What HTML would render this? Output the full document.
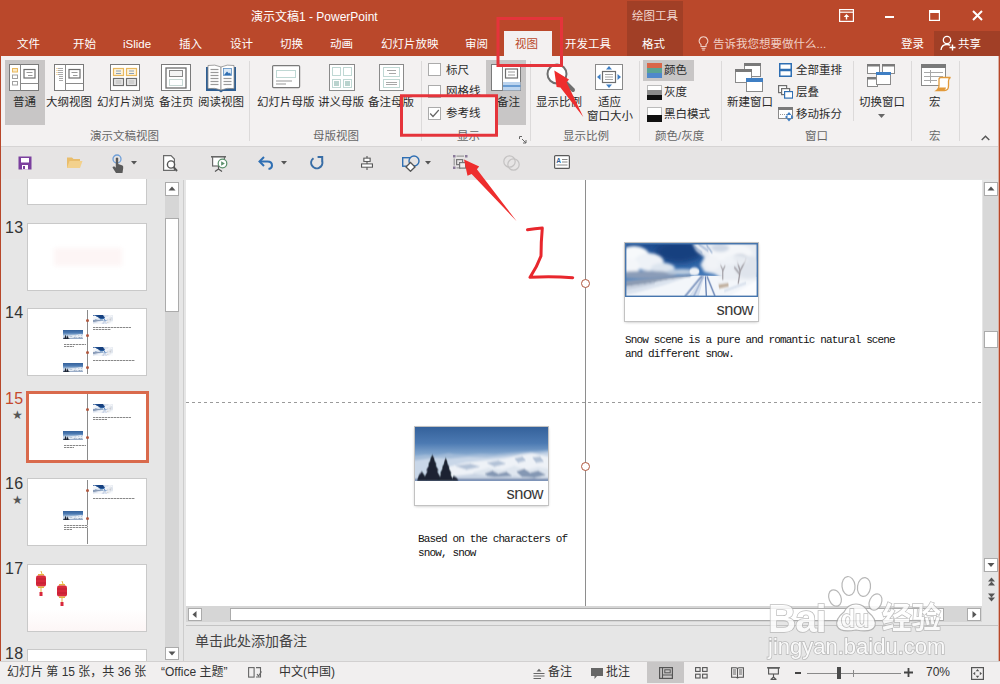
<!DOCTYPE html>
<html lang="zh-CN">
<head>
<meta charset="utf-8">
<title>演示文稿1 - PowerPoint</title>
<style>
*{box-sizing:border-box;margin:0;padding:0}
html,body{width:1000px;height:684px;overflow:hidden;background:#e6e6e6}
body{font-family:"Liberation Sans","Noto Sans CJK SC",sans-serif;font-size:12px;color:#2b2b2b;position:relative}
.abs{position:absolute}
.t{position:absolute;white-space:nowrap;line-height:1}
#titlebar{left:0;top:0;width:1000px;height:56px;background:#ba482b}
#titlebar .t{color:#fff}
.tab{font-size:11.5px;top:39px}
#ribbon{left:0;top:56px;width:1000px;height:91px;background:#f3f1f1;border-bottom:1px solid #d6d4d4}
#ribbon .t{font-size:11.5px;color:#2b2b2b;margin-top:1px}
#ribbon .g{color:#666;font-size:11.5px;top:74px}
.cb{width:13px;height:13px;background:#fff;border:1px solid #ababab}
.sep{position:absolute;top:5px;width:1px;height:80px;background:#dcdada}
#qat{left:0;top:147px;width:1000px;height:32px;background:#e6e4e4}
#thumbs{left:0;top:179px;width:184px;height:482px;background:#e6e6e6;overflow:hidden}
.th{position:absolute;left:27px;width:120px;height:68px;background:#fff;border:1px solid #c9c9c9}
.sbb{background:#fff;border:1px solid #ababab;overflow:hidden}
.sbb svg{display:block}
.num{position:absolute;left:5px;font-size:16px;color:#333;line-height:1;letter-spacing:.4px}
#main{left:186px;top:180px;width:797px;height:426px;background:#fff}
.card{background:#fff;box-shadow:0 0 0 1px #c2c2c2,0 1px 3px rgba(0,0,0,.3)}
.snow{font-family:"Liberation Sans",sans-serif;font-size:16.5px;color:#3a3a3a;letter-spacing:-.5px}
.mono{font-family:"Liberation Mono","DejaVu Sans Mono",monospace;font-size:11px;letter-spacing:-.86px;color:#111;margin-top:1px}
.wm{color:#fff;font-family:"Liberation Sans",sans-serif;-webkit-text-stroke:1.5px #b0b0b0;paint-order:stroke fill}
#status{left:0;top:661px;width:1000px;height:23px;background:#f1efef;border-top:1px solid #d2d0d0}
#status .t{font-size:12px;color:#333;top:4px}
</style>
</head>
<body>

<svg width="0" height="0" style="position:absolute">
  <defs>
    <filter id="b1" x="-20%" y="-20%" width="140%" height="140%"><feGaussianBlur stdDeviation="1.6"/></filter>
    <filter id="b2" x="-20%" y="-20%" width="140%" height="140%"><feGaussianBlur stdDeviation="0.8"/></filter>
    <filter id="b3" x="-20%" y="-20%" width="140%" height="140%"><feGaussianBlur stdDeviation="3"/></filter>
    <linearGradient id="sky1" x1="0" y1="0" x2="0" y2="1"><stop offset="0" stop-color="#1d4a8c"/><stop offset=".55" stop-color="#3b72b4"/><stop offset="1" stop-color="#9fbfe0"/></linearGradient>
    <linearGradient id="sky2" x1="0" y1="0" x2="0" y2="1"><stop offset="0" stop-color="#34619b"/><stop offset=".3" stop-color="#4c7ab2"/><stop offset=".55" stop-color="#8eafd3"/><stop offset="1" stop-color="#b9cde3"/></linearGradient>
    <clipPath id="cp1"><rect x="0" y="0" width="134" height="54"/></clipPath>
    <g id="photo1" clip-path="url(#cp1)">
      <rect width="134" height="54" fill="url(#sky1)"/>
      <ellipse cx="54" cy="9" rx="24" ry="11" fill="#15417f" filter="url(#b3)"/>
      <g filter="url(#b1)">
        <ellipse cx="9" cy="12" rx="15" ry="9" fill="#f7f9fb"/>
        <ellipse cx="24" cy="19" rx="15" ry="9" fill="#eef2f7"/>
        <ellipse cx="3" cy="24" rx="12" ry="9" fill="#f4f6f9"/>
        <ellipse cx="38" cy="25" rx="12" ry="5" fill="#dde5ef"/>
        <ellipse cx="20" cy="32" rx="32" ry="4" fill="#8a9cb8"/>
        <ellipse cx="58" cy="29" rx="16" ry="3" fill="#b9cade"/>
      </g>
      <path d="M0 41 L36 36 L74 32.500 L134 34 V54 H0 Z" fill="#f3f6fa"/>
      <g filter="url(#b2)">
        <path d="M0 38 L24 35.500 L46 33.500 L66 32 L66 33.500 L44 36.500 L20 41 L0 44 Z" fill="#8c9bb3"/>
        <path d="M0 44 L20 41 L44 36.500 L62 34.500 L40 42 L10 50 L0 52 Z" fill="#dbe3ee"/>
        <path d="M0 46 L16 43 L30 40" stroke="#a7b4c8" stroke-width="1" fill="none"/>
        <ellipse cx="70" cy="28.500" rx="5" ry="4" fill="#eef2f7"/>
      </g>
      <g filter="url(#b1)">
        <path d="M68 0 H134 V37 H100 L90 31 L80 29 L76 22 L80 14 L72 8 Z" fill="#e9edf3"/>
        <ellipse cx="106" cy="10" rx="22" ry="10" fill="#f4f6f9"/>
        <ellipse cx="124" cy="24" rx="14" ry="11" fill="#dfe4ec"/>
        <ellipse cx="88" cy="20" rx="8" ry="7" fill="#f1f3f7"/>
        <ellipse cx="96" cy="5" rx="9" ry="4" fill="#cfd8e5"/>
        <ellipse cx="116" cy="15" rx="7" ry="4" fill="#c9d0dc"/>
      </g>
      <g stroke="#5f83b8" stroke-width="1" fill="none" filter="url(#b2)">
        <path d="M70 4 L78 10 M74 1 L84 8 M82 2 L88 10"/>
      </g>
      <g stroke="#8f8a90" fill="none" filter="url(#b2)" opacity=".85">
        <path d="M98.500 37 L98.500 27 L96 21 M98.500 28 L101 22" stroke-width="1.100"/>
        <path d="M114 41 L116 28 L113 18 M116 28 L122 16 M115.500 31 L110 24" stroke-width="1.300"/>
      </g>
      <g filter="url(#b1)"><ellipse cx="112" cy="17" rx="12" ry="5" fill="#eef1f6" opacity=".8"/><ellipse cx="98" cy="20" rx="6" ry="3" fill="#eef1f6" opacity=".8"/></g>
      <g stroke="#5d7aae" fill="none" filter="url(#b2)">
        <path d="M77.500 33 L60 54" stroke-width="1.500"/><path d="M79 33 L69 54" stroke-width="1.500"/>
        <path d="M81 33 L82 54" stroke-width="1.300"/><path d="M82.500 33 L91 54" stroke-width="1.300"/>
      </g>
      <path d="M64 54 L78.500 33 L80 33 L74 54 Z" fill="#c5d2e6" opacity=".6"/>
      <g filter="url(#b2)">
        <path d="M94 41.500 L104 40 L104.500 43.500 L95 45.500 Z" fill="#bfae9c"/>
        <path d="M93 40 L104 38.500" stroke="#eef1f5" stroke-width="1.500"/>
        <path d="M104 54 L134 37 V54 Z" fill="#fbfcfe"/>
        <path d="M100 48 L122 40" stroke="#cbd6e6" stroke-width="1.500"/>
      </g>
    </g>
    <clipPath id="cp2"><rect x="0" y="0" width="134" height="53"/></clipPath>
    <g id="photo2" clip-path="url(#cp2)">
      <rect width="134" height="53" fill="url(#sky2)"/>
      <g filter="url(#b2)">
        <path d="M0 29 L10 27.500 L22 28 L34 26 L40 27 L52 27.500 L66 26.500 L80 27 L96 25.500 L110 24.500 L122 24 L134 23 V53 H0 Z" fill="#a3bbd8"/>
        <path d="M0 33 L18 30.500 L36 31 L54 29.500 L72 30 L90 28.500 L104 27 L116 25 L126 26 L134 25 V53 H0 Z" fill="#c9d7e8"/>
        <path d="M30 40 L50 35 L70 33 L90 31 L106 27.500 L118 26 L134 29 V53 H24 Z" fill="#eef2f7"/>
        <path d="M40 38 L56 36 L66 39 L52 42 Z M72 35 L84 33 L92 36 L80 39 Z M100 31 L108 29 L112 33 L104 35 Z M118 30 L126 29 L130 34 L122 35 Z" fill="#9fb2cc" opacity=".75"/>
        <path d="M60 44 L74 40 L88 42 L100 38 L112 42 L124 39 L134 41 V53 H50 Z" fill="#dfe6ef"/>
        <path d="M70 46 L78 43 L84 46 L92 44 L98 48 L88 50 L76 50 Z M102 44 L110 41 L116 45 L124 43 L132 47 L120 50 L108 49 Z" fill="#6d83a4" opacity=".8"/>
        <path d="M40 48 L60 46 L80 49 L100 48 L120 50 L134 49 V53 H36 Z" fill="#c9d4e3"/>
        <path d="M0 51 H134 V53 H0 Z" fill="#3f6296"/>
      </g>
      <g fill="#1a2430" filter="url(#b2)">
        <path d="M17.500 27.500 L20 32 L19 32 L22 37 L20.500 37 L24 43 L22 43 L26 50 L27 53 H8 L9 50 L13 43 L11 43 L14.500 37 L13 37 L16 32 L15 32 Z"/>
        <path d="M31 30.500 L33 35 L32.200 35 L35 40 L33.800 40 L37 46 L35.500 46 L39 53 H23 L26.500 46 L25 46 L28.200 40 L27 40 L29.800 35 L29 35 Z"/>
        <path d="M2 53 L4 47 L7 44 L10 48 L12 53 Z M36 53 L39 48 L42 50 L44 53 Z"/>
      </g>
    </g>
  </defs>
</svg>
<!-- TITLE BAR -->
<div id="titlebar" class="abs">
  <div class="t" style="left:251px;top:11px;font-size:12px">演示文稿1 - PowerPoint</div>
  <div class="abs" style="left:627px;top:1px;width:56px;height:55px;background:#a13f26"></div>
  <div class="t" style="left:632px;top:11px;font-size:11.5px;color:#f3d9d1">绘图工具</div>
  <div class="t tab" style="left:17px">文件</div>
  <div class="t tab" style="left:73px">开始</div>
  <div class="t tab" style="left:123px">iSlide</div>
  <div class="t tab" style="left:179px">插入</div>
  <div class="t tab" style="left:230px">设计</div>
  <div class="t tab" style="left:280px">切换</div>
  <div class="t tab" style="left:330px">动画</div>
  <div class="t tab" style="left:381px">幻灯片放映</div>
  <div class="t tab" style="left:465px">审阅</div>
  <div class="abs" style="left:504px;top:31px;width:48px;height:25px;background:#f3f1f1"></div>
  <div class="t tab" style="left:515px;color:#ba482b">视图</div>
  <div class="t tab" style="left:565px">开发工具</div>
  <div class="t tab" style="left:642px">格式</div>
  <div class="t tab" style="left:713px;color:#f0cfc5">告诉我您想要做什么...</div>
  <div class="t tab" style="left:901px">登录</div>
  <div class="abs" style="left:934px;top:31px;width:66px;height:25px;background:#a13f26"></div>
  <div class="t tab" style="left:958px">共享</div>

  <svg class="abs" style="left:839px;top:9px" width="15" height="13" viewBox="0 0 15 13"><rect x=".6" y=".6" width="13.8" height="11.8" fill="none" stroke="#fff" stroke-width="1.2"/><line x1=".6" y1="3.2" x2="14.4" y2="3.2" stroke="#fff" stroke-width="1.2"/><path d="M7.500 5 L10.300 8 H8.200 V10.500 H6.800 V8 H4.700 Z" fill="#fff"/></svg>
  <div class="abs" style="left:885px;top:16px;width:9px;height:2px;background:#fff"></div>
  <svg class="abs" style="left:929px;top:10px" width="11" height="11" viewBox="0 0 11 11"><rect x=".6" y=".6" width="9.8" height="9.8" fill="none" stroke="#fff" stroke-width="1.2"/><rect x="0" y="0" width="11" height="3" fill="#fff"/></svg>
  <svg class="abs" style="left:972px;top:10px" width="11" height="11" viewBox="0 0 11 11"><path d="M1 1 L10 10 M10 1 L1 10" stroke="#fff" stroke-width="2" fill="none"/></svg>
  <svg class="abs" style="left:698px;top:36px" width="11" height="15" viewBox="0 0 11 15"><path d="M5.500 .8 A4.300 4.300 0 0 1 8 8.600 V10.500 H3 V8.600 A4.300 4.300 0 0 1 5.500 .8 Z" fill="none" stroke="#f0cfc5" stroke-width="1.100"/><line x1="3.500" y1="12.300" x2="7.500" y2="12.300" stroke="#f0cfc5" stroke-width="1.100"/><line x1="4.200" y1="14" x2="6.800" y2="14" stroke="#f0cfc5" stroke-width="1.100"/></svg>
  <svg class="abs" style="left:940px;top:35px" width="16" height="16" viewBox="0 0 16 16"><circle cx="7" cy="5" r="3.700" fill="none" stroke="#fff" stroke-width="1.300"/><path d="M1 15 Q1.500 9.500 7 9.500 Q9 9.500 10.200 10.300" fill="none" stroke="#fff" stroke-width="1.300"/><path d="M12.500 9.500 V15.500 M9.500 12.500 H15.500" stroke="#fff" stroke-width="1.400"/></svg>
</div>

<!-- RIBBON -->
<div id="ribbon" class="abs">
  <!-- group 1 -->
  <div class="abs" style="left:5px;top:4px;width:40px;height:65px;background:#c8c6c6"></div>
  <svg class="abs" style="left:9px;top:8px" width="31" height="28" viewBox="0 0 31 28">
    <rect x="0.5" y="0.5" width="29" height="26" fill="#fff" stroke="#7a7a7a"/>
    <line x1="11.5" y1="0.5" x2="11.5" y2="26.5" stroke="#8a8a8a"/>
    <line x1="11.5" y1="19.5" x2="29.5" y2="19.5" stroke="#8a8a8a"/>
    <rect x="3.5" y="4.5" width="5" height="3.5" fill="#fbe9c4" stroke="#e8b85e"/>
    <rect x="3.5" y="11" width="5" height="3.5" fill="#fff" stroke="#a0a0a0"/>
    <rect x="3.5" y="17.5" width="5" height="3.5" fill="#fff" stroke="#a0a0a0"/>
    <rect x="15" y="5.5" width="11" height="8.5" fill="#fff" stroke="#6e6e6e" stroke-width="1.2"/>
    <line x1="17.5" y1="8.5" x2="23.5" y2="8.5" stroke="#9a9a9a"/>
    <line x1="19" y1="11.5" x2="23.5" y2="11.5" stroke="#9a9a9a"/>
  </svg>
  <div class="t" style="left:13px;top:40px">普通</div>

  <svg class="abs" style="left:54px;top:8px" width="31" height="28" viewBox="0 0 31 28">
    <rect x="0.5" y="0.5" width="29" height="26" fill="#fff" stroke="#7a7a7a"/>
    <line x1="11.5" y1="0.5" x2="11.5" y2="26.5" stroke="#8a8a8a"/>
    <line x1="11.5" y1="19.5" x2="29.5" y2="19.5" stroke="#8a8a8a"/>
    <g stroke="#a9a9a9"><line x1="4" y1="4.5" x2="9" y2="4.5"/><line x1="4" y1="6.5" x2="9" y2="6.5"/><line x1="4" y1="8.5" x2="9" y2="8.5"/><line x1="4" y1="10.5" x2="9" y2="10.5"/><line x1="5" y1="12.5" x2="9" y2="12.5"/><line x1="5" y1="14.5" x2="9" y2="14.5"/><line x1="5" y1="16.5" x2="9" y2="16.5"/></g>
    <g fill="#e8b85e"><rect x="2.5" y="4" width="1" height="1"/><rect x="2.5" y="6" width="1" height="1"/><rect x="2.5" y="8" width="1" height="1"/><rect x="2.5" y="10" width="1" height="1"/></g>
    <rect x="15" y="5.5" width="11" height="8.5" fill="#fff" stroke="#6e6e6e" stroke-width="1.2"/>
    <line x1="17.5" y1="8.5" x2="23.5" y2="8.5" stroke="#9a9a9a"/>
    <line x1="19" y1="11.5" x2="23.5" y2="11.5" stroke="#9a9a9a"/>
  </svg>
  <div class="t" style="left:46px;top:40px">大纲视图</div>

  <svg class="abs" style="left:110px;top:8px" width="31" height="28" viewBox="0 0 31 28">
    <rect x="0.5" y="0.5" width="29" height="26" fill="#fff" stroke="#7a7a7a"/>
    <rect x="3.5" y="4.5" width="10" height="7" fill="#fdf3dc" stroke="#e8b85e" stroke-width="1.2"/>
    <rect x="16.5" y="4.5" width="10" height="7" fill="#fdf3dc" stroke="#e8b85e" stroke-width="1.2"/>
    <rect x="3.5" y="14.5" width="10" height="7" fill="#eee" stroke="#6e6e6e" stroke-width="1.2"/>
    <rect x="16.5" y="14.5" width="10" height="7" fill="#eee" stroke="#6e6e6e" stroke-width="1.2"/>
    <g stroke="#8aa0b8"><line x1="6" y1="7" x2="11" y2="7"/><line x1="6" y1="9.5" x2="11" y2="9.5"/><line x1="19" y1="7" x2="24" y2="7"/><line x1="19" y1="9.5" x2="24" y2="9.5"/></g>
    <g stroke="#b0b0b0"><line x1="5.5" y1="17" x2="11.5" y2="17"/><line x1="5.5" y1="19" x2="11.5" y2="19"/><line x1="18.5" y1="17" x2="24.5" y2="17"/><line x1="18.5" y1="19" x2="24.5" y2="19"/></g>
  </svg>
  <div class="t" style="left:97px;top:40px">幻灯片浏览</div>

  <svg class="abs" style="left:161px;top:8px" width="31" height="28" viewBox="0 0 31 28">
    <rect x="0.5" y="0.5" width="29" height="26" fill="#fff" stroke="#7a7a7a"/>
    <rect x="5" y="4" width="20" height="20" fill="#fff" stroke="#6e6e6e" stroke-width="1.3"/>
    <rect x="8.5" y="6.5" width="13" height="6" fill="#f4f4f4" stroke="#8a8a8a"/>
    <rect x="8.5" y="15.5" width="13" height="6" fill="none" stroke="#8fb0a8" stroke-dasharray="1 1"/>
  </svg>
  <div class="t" style="left:159px;top:40px">备注页</div>

  <svg class="abs" style="left:205px;top:7px" width="32" height="30" viewBox="0 0 32 30">
    <path d="M1 4 L1 28 L14 28 L16 29.5 L18 28 L31 28 L31 4 Z" fill="#2f5f93"/>
    <path d="M3 2.5 Q10 1 16 4 L16 27 Q10 24.5 3 25.5 Z" fill="#fff" stroke="#8a8a8a" stroke-width=".8"/>
    <path d="M29 2.5 Q22 1 16 4 L16 27 Q22 24.5 29 25.5 Z" fill="#fff" stroke="#8a8a8a" stroke-width=".8"/>
    <g stroke="#9a9a9a" stroke-width="1.2"><line x1="5.5" y1="6.5" x2="13.5" y2="6.5"/><line x1="5.5" y1="9.5" x2="13.5" y2="9.5"/><line x1="5.5" y1="12.5" x2="13.5" y2="12.5"/><line x1="5.5" y1="15.5" x2="13.5" y2="15.5"/><line x1="5.5" y1="18.5" x2="13.5" y2="18.5"/><line x1="5.5" y1="21.5" x2="13.5" y2="21.5"/>
    <line x1="18.5" y1="15.5" x2="26.5" y2="15.5"/><line x1="18.5" y1="18.5" x2="26.5" y2="18.5"/><line x1="18.5" y1="21.5" x2="26.5" y2="21.5"/></g>
    <rect x="18.5" y="5.5" width="8" height="7" fill="#dbe9f6" stroke="#5b8fc4" stroke-width=".8"/>
    <path d="M19 12 L22 8.5 L24 10.5 L25 9.5 L26 12 Z" fill="#2f6fb3"/>
  </svg>
  <div class="t" style="left:198px;top:40px">阅读视图</div>
  <div class="t g" style="left:90px">演示文稿视图</div>
  <div class="sep" style="left:249px"></div>

  <!-- group 2 -->
  <svg class="abs" style="left:272px;top:9px" width="29" height="24" viewBox="0 0 29 24">
    <rect x="0.6" y="0.6" width="27" height="22" rx="1" fill="#fff" stroke="#7a7a7a" stroke-width="1.2"/>
    <rect x="4.5" y="5.5" width="19" height="7" fill="none" stroke="#7fb0a8" stroke-dasharray="1 1"/>
    <line x1="4" y1="16" x2="20" y2="16" stroke="#a8a8a8" stroke-width="1.2"/>
    <line x1="4" y1="19" x2="14" y2="19" stroke="#a8a8a8" stroke-width="1.2"/>
  </svg>
  <div class="t" style="left:257px;top:40px">幻灯片母版</div>

  <svg class="abs" style="left:329px;top:8px" width="27" height="28" viewBox="0 0 27 28">
    <rect x="0.5" y="0.5" width="25" height="26" fill="#fff" stroke="#8a8a8a"/>
    <g fill="none" stroke="#7fb0a8" stroke-dasharray="1 1">
      <rect x="3.5" y="3.5" width="8" height="8"/><rect x="14.5" y="3.5" width="8" height="8"/>
      <rect x="3.5" y="15.5" width="8" height="8"/><rect x="14.5" y="15.5" width="8" height="8"/>
    </g>
    <g fill="#b9d3ce"><rect x="5" y="17" width="5" height="5"/><rect x="16" y="17" width="5" height="5"/></g>
  </svg>
  <div class="t" style="left:318px;top:40px">讲义母版</div>

  <svg class="abs" style="left:379px;top:8px" width="27" height="28" viewBox="0 0 27 28">
    <rect x="0.5" y="0.5" width="24" height="26" fill="#fff" stroke="#8a8a8a"/>
    <g fill="none" stroke="#7fb0a8" stroke-dasharray="1 1">
      <rect x="4.5" y="3.5" width="16" height="9"/><rect x="4.5" y="15.5" width="16" height="8"/>
    </g>
    <g stroke="#a8a8a8"><line x1="8" y1="6.5" x2="17" y2="6.5"/><line x1="10" y1="9.5" x2="17" y2="9.5"/><line x1="7" y1="18.5" x2="18" y2="18.5"/><line x1="7" y1="20.5" x2="18" y2="20.5"/></g>
  </svg>
  <div class="t" style="left:368px;top:40px">备注母版</div>
  <div class="t g" style="left:313px">母版视图</div>
  <div class="sep" style="left:421px"></div>

  <!-- group 3 -->
  <div class="abs cb" style="left:428px;top:7px"></div>
  <div class="t" style="left:446px;top:8px">标尺</div>
  <div class="abs cb" style="left:428px;top:29px"></div>
  <div class="t" style="left:446px;top:29px">网格线</div>
  <div class="abs cb" style="left:428px;top:51px;z-index:2"></div>
  <svg class="abs" style="left:429px;top:53px;z-index:2" width="11" height="9" viewBox="0 0 11 9"><path d="M1.2 4.5 L4 7.5 L9.8 1" fill="none" stroke="#666" stroke-width="1.2"/></svg>
  <div class="t" style="left:446px;top:51px;z-index:2">参考线</div>

  <div class="abs" style="left:486px;top:4px;width:40px;height:65px;background:#c8c6c6"></div>
  <svg class="abs" style="left:491px;top:8px" width="31" height="28" viewBox="0 0 31 28">
    <rect x="0.5" y="0.5" width="29" height="26" fill="#fff" stroke="#7a7a7a"/>
    <line x1="11.5" y1="0.5" x2="11.5" y2="26.5" stroke="#8a8a8a"/>
    <rect x="14.5" y="5" width="12" height="9" fill="#fff" stroke="#6e6e6e" stroke-width="1.2"/>
    <line x1="17" y1="8" x2="24" y2="8" stroke="#9a9a9a"/><line x1="17" y1="11" x2="24" y2="11" stroke="#9a9a9a"/>
    <rect x="12" y="18" width="17.5" height="8.5" fill="#bcd4ee"/>
    <line x1="12" y1="22" x2="29.5" y2="22" stroke="#3f7fc4" stroke-width="1.3"/>
  </svg>
  <div class="t" style="left:497px;top:40px">备注</div>
  <div class="abs" style="left:484px;top:40px;width:12px;height:39px;background:#f3f1f1;z-index:1"></div>
  <div class="t g" style="left:457px;z-index:2">显示</div>
  <svg class="abs" style="left:519px;top:80px" width="8" height="8" viewBox="0 0 8 8"><path d="M0.5 3 V0.5 H3 M3 3 L7 7 M4 7 H7 V4" fill="none" stroke="#666" stroke-width="1"/></svg>
  <div class="sep" style="left:530px"></div>

  <!-- group 4 -->
  <svg class="abs" style="left:545px;top:6px" width="32" height="32" viewBox="0 0 32 32">
    <circle cx="12" cy="12" r="9.5" fill="#fff" stroke="#6e6e6e" stroke-width="2"/>
    <line x1="19" y1="19" x2="28" y2="28" stroke="#6e6e6e" stroke-width="4" stroke-linecap="round"/>
  </svg>
  <div class="t" style="left:536px;top:40px">显示比例</div>
  <svg class="abs" style="left:595px;top:8px" width="29" height="27" viewBox="0 0 29 27">
    <rect x="0.5" y="0.5" width="27" height="25" fill="#fff" stroke="#8a8a8a"/>
    <rect x="7.5" y="7.5" width="13" height="11" fill="#fff" stroke="#6e6e6e" stroke-width="1.2"/>
    <g stroke="#a8a8a8"><line x1="10" y1="10.5" x2="18" y2="10.5"/><line x1="10" y1="13" x2="18" y2="13"/><line x1="10" y1="15.5" x2="18" y2="15.5"/></g>
    <g fill="#3f7fc4"><path d="M14 2 L17 5.5 H11 Z"/><path d="M14 24 L17 20.5 H11 Z"/><path d="M2 13 L5.5 10 V16 Z"/><path d="M26 13 L22.5 10 V16 Z"/></g>
  </svg>
  <div class="t" style="left:598px;top:40px">适应</div>
  <div class="t" style="left:587px;top:54px">窗口大小</div>
  <div class="t g" style="left:563px">显示比例</div>
  <div class="sep" style="left:639px"></div>

  <!-- group 5 -->
  <div class="abs" style="left:643px;top:4px;width:51px;height:21px;background:#c8c6c6"></div>
  <svg class="abs" style="left:647px;top:7px" width="15" height="15" viewBox="0 0 15 15"><rect width="15" height="5" fill="#d9674a"/><rect y="5" width="15" height="5" fill="#5aa394"/><rect y="10" width="15" height="5" fill="#4f88cc"/></svg>
  <div class="t" style="left:664px;top:8px">颜色</div>
  <svg class="abs" style="left:647px;top:29px" width="15" height="15" viewBox="0 0 15 15"><rect x=".5" y=".5" width="14" height="14" fill="#fff" stroke="#bbb"/><rect y="5" width="15" height="5" fill="#8c8c8c"/><rect y="10" width="15" height="5" fill="#111"/></svg>
  <div class="t" style="left:664px;top:30px">灰度</div>
  <svg class="abs" style="left:647px;top:51px" width="15" height="15" viewBox="0 0 15 15"><rect x=".5" y=".5" width="14" height="14" fill="#fff" stroke="#bbb"/><rect y="8" width="15" height="7" fill="#111"/></svg>
  <div class="t" style="left:664px;top:52px">黑白模式</div>
  <div class="t g" style="left:655px">颜色/灰度</div>
  <div class="sep" style="left:721px"></div>

  <!-- group 6 -->
  <svg class="abs" style="left:735px;top:7px" width="29" height="30" viewBox="0 0 29 30">
    <rect x="9.5" y="0.5" width="16" height="13" fill="#fff" stroke="#8a8a8a"/><rect x="9" y="0" width="17" height="3" fill="#7a7a7a"/>
    <rect x="0.5" y="6.5" width="16" height="13" fill="#fff" stroke="#8a8a8a"/><rect x="0" y="6" width="17" height="3" fill="#7a7a7a"/>
    <rect x="11.5" y="15.5" width="16" height="13" fill="#fff" stroke="#8a8a8a"/><rect x="11" y="15" width="17" height="4" fill="#3f7fc4"/>
  </svg>
  <div class="t" style="left:727px;top:40px">新建窗口</div>
  <svg class="abs" style="left:779px;top:7px" width="13" height="14" viewBox="0 0 13 14"><rect x=".75" y=".75" width="11.5" height="12.5" fill="#fff" stroke="#2f6fb3" stroke-width="1.5"/><line x1="0" y1="7" x2="13" y2="7" stroke="#2f6fb3" stroke-width="2.5"/></svg>
  <div class="t" style="left:796px;top:8px">全部重排</div>
  <svg class="abs" style="left:778px;top:29px" width="15" height="14" viewBox="0 0 15 14"><rect x=".6" y=".6" width="8" height="7" fill="#fff" stroke="#6e6e6e" stroke-width="1.2"/><rect x="3.6" y="3.6" width="8" height="6" fill="#fff" stroke="#6e6e6e" stroke-width="1.2"/><rect x="6.6" y="6.6" width="8" height="6.5" fill="#fff" stroke="#2f6fb3" stroke-width="1.2"/></svg>
  <div class="t" style="left:796px;top:30px">层叠</div>
  <svg class="abs" style="left:778px;top:51px" width="16" height="15" viewBox="0 0 16 15"><rect x=".5" y=".5" width="14" height="11" fill="#fff" stroke="#8a8a8a"/><rect x="0" y="0" width="15" height="3" fill="#7a7a7a"/><line x1="2" y1="7.5" x2="9" y2="7.5" stroke="#9a9a9a" stroke-dasharray="1 1"/><path d="M11 5 L13.5 8 H8.5 Z M11 14.5 L13.5 11.5 H8.5 Z M7 10 L9.5 7.8 V12.2 Z M15.5 10 L13 7.8 V12.2 Z" fill="#3f7fc4"/></svg>
  <div class="t" style="left:796px;top:52px">移动拆分</div>
  <div class="sep" style="left:853px;height:60px"></div>
  <svg class="abs" style="left:867px;top:8px" width="29" height="25" viewBox="0 0 29 25">
    <rect x="0.5" y="0.5" width="12" height="9" fill="#fff" stroke="#8a8a8a"/><rect x="0" y="0" width="13" height="2.5" fill="#7a7a7a"/>
    <rect x="15.5" y="0.5" width="12" height="9" fill="#fff" stroke="#8a8a8a"/><rect x="15" y="0" width="13" height="2.5" fill="#7a7a7a"/>
    <rect x="0.5" y="13.5" width="10" height="9" fill="#fff" stroke="#8a8a8a"/><rect x="0" y="13" width="11" height="2.5" fill="#7a7a7a"/>
    <rect x="9.500" y="8.5" width="14" height="12" fill="#fff" stroke="#8a8a8a"/><rect x="9" y="8" width="15" height="3" fill="#3f7fc4"/>
  </svg>
  <div class="t" style="left:859px;top:40px">切换窗口</div>
  <svg class="abs" style="left:878px;top:58px" width="7" height="4" viewBox="0 0 7 4"><path d="M0 0 H7 L3.5 4 Z" fill="#666"/></svg>
  <div class="t g" style="left:805px">窗口</div>
  <div class="sep" style="left:911px"></div>

  <!-- group 7 -->
  <svg class="abs" style="left:921px;top:8px" width="31" height="28" viewBox="0 0 31 28">
    <rect x="0.5" y="0.5" width="24" height="21" fill="#fff" stroke="#8a8a8a"/><rect x="0" y="0" width="25" height="4" fill="#7a7a7a"/>
    <g stroke="#a8a8a8"><line x1="3" y1="8.500" x2="22" y2="8.500"/><line x1="3" y1="12.5" x2="22" y2="12.5"/><line x1="3" y1="16.5" x2="16" y2="16.5"/><line x1="9.5" y1="6" x2="9.5" y2="19"/></g>
    <path d="M18 15.500 Q18 13.500 20 13.500 H29.500 Q27.500 14.500 27.500 17 V22 Q27.500 26.500 23.500 26.500 H15.500 Q18 25 18 22 Z" fill="#fff" stroke="#e29a3b" stroke-width="1.3"/>
    <path d="M15.500 26.500 H23 Q25 25 25 23.500 H17 Q17 25.500 15.500 26.500 Z" fill="#e29a3b"/>
  </svg>
  <div class="t" style="left:929px;top:40px">宏</div>
  <div class="t g" style="left:929px">宏</div>
  <div class="sep" style="left:959px"></div>
  <svg class="abs" style="left:981px;top:79px" width="9" height="6" viewBox="0 0 9 6"><path d="M0.700 5 L4.500 1.200 L8.300 5" fill="none" stroke="#555" stroke-width="1.400"/></svg>
</div>

<!-- QAT -->
<div id="qat" class="abs">
  <svg class="abs" style="left:18px;top:9px" width="14" height="14" viewBox="0 0 14 14"><path d="M.5 .5 H13.500 V13.500 H.5 Z" fill="#7b3f9e"/><rect x="3" y="2" width="8" height="4.500" fill="#fff"/><rect x="4" y="9" width="6" height="4.500" fill="#fff"/><rect x="5" y="10" width="2" height="3" fill="#7b3f9e"/></svg>
  <svg class="abs" style="left:66px;top:9px" width="17" height="13" viewBox="0 0 17 13"><path d="M1 1.500 H6 L7.500 3 H14 V12 H1 Z" fill="#e9bd6c"/><path d="M3.500 5 H16.500 L14 12 H1 Z" fill="#f3d18c"/></svg>
  <svg class="abs" style="left:111px;top:7px" width="14" height="20" viewBox="0 0 14 20"><circle cx="6" cy="5" r="4" fill="none" stroke="#6f9fd8" stroke-width="1.300"/><path d="M4.800 4 Q6 2.800 7.200 4 V10 L11.500 11.500 Q12.500 12 12.200 14 L11.500 19 H5 L1.500 13.500 Q1.800 12 3.500 12.500 L4.800 13.800 Z" fill="#5a5a5a"/></svg>
  <svg class="abs" style="left:131px;top:14px" width="6" height="4" viewBox="0 0 6 4"><path d="M0 0 H6 L3 3.500 Z" fill="#555"/></svg>
  <svg class="abs" style="left:163px;top:8px" width="15" height="17" viewBox="0 0 15 17"><path d="M.6 .6 H8 L11.400 4 V15.400 H.6 Z" fill="#fff" stroke="#6a6a6a" stroke-width="1.200"/><circle cx="8" cy="9.500" r="3.600" fill="#fff" stroke="#555" stroke-width="1.400"/><line x1="10.600" y1="12.200" x2="14" y2="16" stroke="#555" stroke-width="2"/></svg>
  <svg class="abs" style="left:211px;top:9px" width="17" height="17" viewBox="0 0 17 17"><line x1="0" y1=".8" x2="15" y2=".8" stroke="#555" stroke-width="1.400"/><rect x="1.600" y="1" width="11.800" height="9" fill="#fff" stroke="#6a6a6a" stroke-width="1.200"/><path d="M7.500 10 V13 M4 15.500 L7.500 13 L11 15.500" fill="none" stroke="#555" stroke-width="1.200"/><circle cx="11.500" cy="7.500" r="4.300" fill="#fff" stroke="#5a8f6a" stroke-width="1.200"/><path d="M10.200 5.300 L13.800 7.500 L10.200 9.700 Z" fill="#5a8f6a"/></svg>
  <svg class="abs" style="left:258px;top:9px" width="16" height="14" viewBox="0 0 16 14"><path d="M6 1 L1.500 5.500 L6 10" fill="none" stroke="#2f6fb3" stroke-width="2"/><path d="M2 5.500 H9.500 Q14 5.500 14 9.500 Q14 12.500 10.500 13" fill="none" stroke="#2f6fb3" stroke-width="2"/></svg>
  <svg class="abs" style="left:281px;top:14px" width="6" height="4" viewBox="0 0 6 4"><path d="M0 0 H6 L3 3.500 Z" fill="#555"/></svg>
  <svg class="abs" style="left:310px;top:8px" width="15" height="16" viewBox="0 0 15 16"><path d="M3.500 3.200 A5.600 5.600 0 1 0 12.100 6" fill="none" stroke="#386da6" stroke-width="2"/><path d="M7.600 2 H12.200 V6.600" fill="none" stroke="#386da6" stroke-width="2"/></svg>
  <svg class="abs" style="left:361px;top:9px" width="12" height="14" viewBox="0 0 13 17" preserveAspectRatio="none"><line x1="6.500" y1="0" x2="6.500" y2="17" stroke="#555" stroke-width="1.200"/><rect x="3.100" y="2.600" width="6.800" height="4" fill="#fff" stroke="#555" stroke-width="1.200"/><rect x=".6" y="9.600" width="11.800" height="4" fill="#fff" stroke="#555" stroke-width="1.200"/></svg>
  <svg class="abs" style="left:402px;top:8px" width="19" height="17" viewBox="0 0 19 17"><rect x=".7" y="2.700" width="9" height="8.500" fill="none" stroke="#2f6fb3" stroke-width="1.400"/><circle cx="12" cy="6" r="5" fill="#e6e4e4" stroke="#2f6fb3" stroke-width="1.400"/><path d="M8.500 7.500 L13 12 L8.500 16.300 L4 12 Z" fill="#fff" stroke="#555" stroke-width="1.300"/></svg>
  <svg class="abs" style="left:425px;top:14px" width="6" height="4" viewBox="0 0 6 4"><path d="M0 0 H6 L3 3.500 Z" fill="#555"/></svg>
  <svg class="abs" style="left:453px;top:8px" width="16" height="15" viewBox="0 0 16 15"><g fill="#8a7a9a"><rect x="0" y="0" width="2.500" height="2.500"/><rect x="12" y="0" width="2.500" height="2.500"/><rect x="0" y="11.500" width="2.500" height="2.500"/></g><path d="M1.200 3.500 V10.500 M3.500 1.200 H11 M3.500 12.800 H8" stroke="#9a9a9a" stroke-width="1.200" fill="none"/><rect x="3.600" y="4.600" width="6" height="5" fill="none" stroke="#777" stroke-width="1.200"/><rect x="6.600" y="7.600" width="6" height="5.500" fill="#eee" stroke="#777" stroke-width="1.200"/></svg>
  <svg class="abs" style="left:503px;top:8px" width="17" height="16" viewBox="0 0 17 16"><circle cx="6.500" cy="6.500" r="5.700" fill="none" stroke="#c4c2c2" stroke-width="1.200"/><circle cx="10.500" cy="9.500" r="5.700" fill="none" stroke="#c4c2c2" stroke-width="1.200"/></svg>
  <svg class="abs" style="left:554px;top:8px" width="16" height="14" viewBox="0 0 16 14"><rect x=".6" y=".6" width="14.800" height="12.800" rx="1" fill="#fff" stroke="#5a5a5a" stroke-width="1.200"/><text x="2.200" y="7.500" font-family="Liberation Sans, sans-serif" font-size="6.500" font-weight="bold" fill="#2f5f93">A</text><path d="M8 4.500 H13.500 M8 7 H13.500 M2.500 10 H13.500" stroke="#8a8a8a" stroke-width="1"/></svg>
</div>

<!-- THUMBNAILS -->
<div id="thumbs" class="abs">
<div class="th" style="top:0px;height:26px;border-top:none"></div>
<div class="num" style="top:41px">13</div>
<div class="th" style="top:44px"><div class="abs" style="left:26px;top:24px;width:68px;height:18px;background:#fdf5f5;filter:blur(2px)"></div></div>
<div class="num" style="top:126px">14</div>
<div class="th" style="top:129px"><div class="abs" style="left:59px;top:1px;width:1px;height:64px;background:#8a8a8a"></div><div class="abs" style="left:58px;top:10px;width:3px;height:3px;border-radius:50%;background:#b0573e"></div><div class="abs" style="left:58px;top:25px;width:3px;height:3px;border-radius:50%;background:#b0573e"></div><div class="abs" style="left:58px;top:42px;width:3px;height:3px;border-radius:50%;background:#b0573e"></div><div class="abs" style="left:58px;top:57px;width:3px;height:3px;border-radius:50%;background:#b0573e"></div><svg class="abs" style="left:65px;top:6px" width="20" height="9" viewBox="0 0 134 54" preserveAspectRatio="none"><use href="#photo1"/></svg><div class="abs" style="left:65px;top:18px;width:38px;height:1px;background:repeating-linear-gradient(90deg,#888 0 2px,#ccc 2px 3px)"></div><div class="abs" style="left:65px;top:20px;width:18px;height:1px;background:repeating-linear-gradient(90deg,#888 0 2px,#ccc 2px 3px)"></div><svg class="abs" style="left:35px;top:21px" width="20" height="9" viewBox="0 0 134 53" preserveAspectRatio="none"><use href="#photo2"/></svg><div class="abs" style="left:36px;top:35px;width:22px;height:1px;background:repeating-linear-gradient(90deg,#888 0 2px,#ccc 2px 3px)"></div><div class="abs" style="left:36px;top:37px;width:10px;height:1px;background:repeating-linear-gradient(90deg,#888 0 2px,#ccc 2px 3px)"></div><svg class="abs" style="left:65px;top:38px" width="20" height="9" viewBox="0 0 134 54" preserveAspectRatio="none"><use href="#photo1"/></svg><div class="abs" style="left:65px;top:51px;width:42px;height:1px;background:repeating-linear-gradient(90deg,#888 0 2px,#ccc 2px 3px)"></div><svg class="abs" style="left:35px;top:54px" width="20" height="9" viewBox="0 0 134 53" preserveAspectRatio="none"><use href="#photo2"/></svg></div>
<div class="num" style="top:212px;color:#c5482b">15</div>
<div class="t" style="left:12px;top:230px;font-size:12px;color:#555;font-family:'DejaVu Sans',sans-serif">★</div>
<div class="th" style="left:26px;top:212px;width:123px;height:72px;border:3px solid #d96a4c"><div class="abs" style="left:58px;top:0;width:1px;height:66px;background:#8a8a8a"></div><div class="abs" style="left:57px;top:14px;width:3px;height:3px;border-radius:50%;background:#b0573e"></div><div class="abs" style="left:57px;top:42px;width:3px;height:3px;border-radius:50%;background:#b0573e"></div><svg class="abs" style="left:64px;top:10px" width="20" height="9" viewBox="0 0 134 54" preserveAspectRatio="none"><use href="#photo1"/></svg><div class="abs" style="left:64px;top:23px;width:38px;height:1px;background:repeating-linear-gradient(90deg,#888 0 2px,#ccc 2px 3px)"></div><div class="abs" style="left:64px;top:25px;width:14px;height:1px;background:repeating-linear-gradient(90deg,#888 0 2px,#ccc 2px 3px)"></div><svg class="abs" style="left:34px;top:37px" width="20" height="9" viewBox="0 0 134 53" preserveAspectRatio="none"><use href="#photo2"/></svg><div class="abs" style="left:35px;top:51px;width:22px;height:1px;background:repeating-linear-gradient(90deg,#888 0 2px,#ccc 2px 3px)"></div><div class="abs" style="left:35px;top:53px;width:10px;height:1px;background:repeating-linear-gradient(90deg,#888 0 2px,#ccc 2px 3px)"></div></div>
<div class="num" style="top:297px">16</div>
<div class="t" style="left:12px;top:315px;font-size:12px;color:#555;font-family:'DejaVu Sans',sans-serif">★</div>
<div class="th" style="top:299px"><div class="abs" style="left:59px;top:1px;width:1px;height:64px;background:#8a8a8a"></div><div class="abs" style="left:58px;top:10px;width:3px;height:3px;border-radius:50%;background:#b0573e"></div><div class="abs" style="left:58px;top:38px;width:3px;height:3px;border-radius:50%;background:#b0573e"></div><svg class="abs" style="left:65px;top:6px" width="20" height="9" viewBox="0 0 134 54" preserveAspectRatio="none"><use href="#photo1"/></svg><div class="abs" style="left:65px;top:19px;width:42px;height:1px;background:repeating-linear-gradient(90deg,#888 0 2px,#ccc 2px 3px)"></div><svg class="abs" style="left:35px;top:32px" width="20" height="9" viewBox="0 0 134 53" preserveAspectRatio="none"><use href="#photo2"/></svg><div class="abs" style="left:36px;top:46px;width:24px;height:1px;background:repeating-linear-gradient(90deg,#888 0 2px,#ccc 2px 3px)"></div><div class="abs" style="left:36px;top:48px;width:24px;height:1px;background:repeating-linear-gradient(90deg,#888 0 2px,#ccc 2px 3px)"></div><div class="abs" style="left:36px;top:50px;width:8px;height:1px;background:repeating-linear-gradient(90deg,#888 0 2px,#ccc 2px 3px)"></div></div>
<div class="num" style="top:382px">17</div>
<div class="th" style="top:385px"><svg class="abs" style="left:7px;top:6px" width="12" height="26" viewBox="0 0 12 26"><path d="M6 0 L7 3" stroke="#e3b341" stroke-width="1"/><rect x="3" y="3" width="6" height="1.500" fill="#e3b341"/><rect x="1" y="4.500" width="10" height="11" rx="2" fill="#d8283c"/><path d="M1 8 H11 M1 12 H11" stroke="#b81d30" stroke-width=".8"/><rect x="3" y="15.500" width="6" height="1.500" fill="#e3b341"/><path d="M6 17 V21" stroke="#e3b341" stroke-width="1"/><rect x="4.500" y="21" width="3" height="4" fill="#d8283c"/></svg><svg class="abs" style="left:28px;top:16px" width="12" height="26" viewBox="0 0 12 26"><path d="M6 0 L7 3" stroke="#e3b341" stroke-width="1"/><rect x="3" y="3" width="6" height="1.500" fill="#e3b341"/><rect x="1" y="4.500" width="10" height="11" rx="2" fill="#d8283c"/><path d="M1 8 H11 M1 12 H11" stroke="#b81d30" stroke-width=".8"/><rect x="3" y="15.500" width="6" height="1.500" fill="#e3b341"/><path d="M6 17 V21" stroke="#e3b341" stroke-width="1"/><rect x="4.500" y="21" width="3" height="4" fill="#d8283c"/></svg><div class="abs" style="left:0;top:44px;width:118px;height:22px;background:linear-gradient(#fff,#fdf6f6)"></div></div>
<div class="num" style="top:467px">18</div>
<div class="th" style="top:470px"></div>
<div class="abs" style="left:165px;top:3px;width:14px;height:478px;background:#d6d6d6"></div>
<div class="abs sbb" style="left:165px;top:3px;width:14px;height:14px"><svg width="12" height="12" viewBox="0 0 12 12"><path d="M2.500 7.500 L6 3.500 L9.500 7.500 Z" fill="#555"/></svg></div>
<div class="abs sbb" style="left:165px;top:39px;width:14px;height:94px"></div>
<div class="abs sbb" style="left:165px;top:468px;width:14px;height:13px"><svg width="12" height="11" viewBox="0 0 12 11"><path d="M2.500 3.500 L6 7.500 L9.500 3.500 Z" fill="#555"/></svg></div>
</div>

<!-- MAIN SLIDE -->
<div id="main" class="abs">
  <div class="abs" style="left:399px;top:0;width:1px;height:426px;background:#8e8e8e"></div>
  <div class="abs" style="left:0;top:222px;width:796px;height:1px;background:repeating-linear-gradient(90deg,#9a9a9a 0 3px,transparent 3px 6px)"></div>
  <div class="abs" style="left:395px;top:99px;width:9px;height:9px;border:1px solid #b0573e;border-radius:50%;background:#fff"></div>
  <div class="abs" style="left:395px;top:282px;width:9px;height:9px;border:1px solid #b0573e;border-radius:50%;background:#fff"></div>
  <!-- card 1 -->
  <div class="abs card" style="left:439px;top:63px;width:133px;height:78px">
    <svg class="abs" style="left:0;top:0" width="133" height="54" viewBox="0 0 134 54" preserveAspectRatio="none"><use href="#photo1"/><rect x=".7" y=".7" width="132.600" height="52.600" fill="none" stroke="#4675ad" stroke-width="1.400"/></svg>
    <div class="t snow" style="right:5px;top:58px">snow</div>
  </div>
  <div class="t mono" style="left:439px;top:154px">Snow scene is a pure and romantic natural scene</div>
  <div class="t mono" style="left:439px;top:168px">and different snow.</div>
  <!-- card 2 -->
  <div class="abs card" style="left:229px;top:247px;width:133px;height:78px">
    <svg class="abs" style="left:0;top:0" width="133" height="54" viewBox="0 0 134 53" preserveAspectRatio="none"><use href="#photo2"/></svg>
    <div class="t snow" style="right:5px;top:58px">snow</div>
  </div>
  <div class="t mono" style="left:232px;top:353px">Based on the characters of</div>
  <div class="t mono" style="left:232px;top:367px">snow, snow</div>
</div>


<div class="abs" style="left:183px;top:180px;width:1px;height:481px;background:#cdcdcd"></div>
<!-- main scrollbars -->
<div class="abs" style="left:982px;top:180px;width:16px;height:426px;background:#e6e6e6"></div><div class="abs" style="left:983px;top:182px;width:15px;height:390px;background:#d8d8d8"></div>
<div class="abs sbb" style="left:984px;top:182px;width:14px;height:14px"><svg width="12" height="12" viewBox="0 0 12 12"><path d="M2.500 7.500 L6 3.500 L9.500 7.500 Z" fill="#555"/></svg></div>
<div class="abs sbb" style="left:984px;top:331px;width:14px;height:17px"></div>
<div class="abs sbb" style="left:984px;top:558px;width:14px;height:14px"><svg width="12" height="12" viewBox="0 0 12 12"><path d="M2.500 4 L6 8 L9.500 4 Z" fill="#555"/></svg></div>
<div class="abs" style="left:982px;top:573px;width:16px;height:33px;background:#e6e6e6"></div>
<svg class="abs" style="left:987px;top:577px" width="9" height="9" viewBox="0 0 9 9"><path d="M1 4.500 L4.500 .5 L8 4.500 Z M1 8.500 L4.500 4.500 L8 8.500 Z" fill="#555"/></svg>
<svg class="abs" style="left:987px;top:593px" width="9" height="9" viewBox="0 0 9 9"><path d="M1 .5 L4.500 4.500 L8 .5 Z M1 4.500 L4.500 8.500 L8 4.500 Z" fill="#555"/></svg>
<div class="abs" style="left:186px;top:606px;width:796px;height:16px;background:#d6d6d6"></div>
<div class="abs sbb" style="left:188px;top:608px;width:14px;height:13px"><svg width="12" height="11" viewBox="0 0 12 11"><path d="M7.500 2 L3.500 5.500 L7.500 9 Z" fill="#555"/></svg></div>
<div class="abs sbb" style="left:230px;top:608px;width:714px;height:13px"></div>
<div class="abs sbb" style="left:967px;top:608px;width:14px;height:13px"><svg width="12" height="11" viewBox="0 0 12 11"><path d="M4.500 2 L8.500 5.500 L4.500 9 Z" fill="#555"/></svg></div>
<div class="abs" style="left:186px;top:625px;width:814px;height:1px;background:#c4c4c4"></div>
<div class="t" style="left:195px;top:634px;font-size:14px;color:#444">单击此处添加备注</div>

<!-- watermark -->
<div class="abs" style="left:760px;top:565px;width:200px;height:100px;opacity:.82;pointer-events:none">
  <svg class="abs" style="left:60px;top:5px" width="70" height="66" viewBox="60 5 70 66">
    <g fill="#fff" stroke="#a8a8a8" stroke-width="1.200">
      <ellipse cx="75" cy="33" rx="6" ry="8.500" transform="rotate(-22 75 33)"/>
      <ellipse cx="88.500" cy="21" rx="6.500" ry="9.500" transform="rotate(-6 88.500 21)"/>
      <ellipse cx="104" cy="22" rx="6.500" ry="9.500" transform="rotate(8 104 22)"/>
      <ellipse cx="115.500" cy="37" rx="6" ry="8.500" transform="rotate(24 115.500 37)"/>
      <path d="M96 39 Q104 39 108 47 Q117 54 115 61 Q112 68 96 65 Q80 68 77 61 Q75 54 84 47 Q88 39 96 39 Z"/>
    </g>
  </svg>
  <div class="t wm" style="left:8px;top:34px;font-size:39px;font-weight:bold;letter-spacing:-1px">Bai</div>
  <div class="t wm" style="left:81px;top:43px;font-size:23px;font-weight:bold">du</div>
  <div class="t wm" style="left:122px;top:36px;font-size:29.500px;font-weight:bold;font-family:'Noto Sans CJK SC',sans-serif">经验</div>
  <div class="t wm" style="left:8px;top:71px;font-size:22px">jingyan.baidu.com</div>
</div>

<!-- red annotations -->
<svg class="abs" style="left:0;top:0;pointer-events:none;z-index:5" width="1000" height="684" viewBox="0 0 1000 684">
  <rect x="498" y="18.500" width="63.500" height="47" fill="none" stroke="#e5343b" stroke-width="3"/>
  <rect x="401.500" y="95.750" width="95" height="39.500" fill="none" stroke="#e5343b" stroke-width="3"/>
  <path d="M554.300 70.500 L569 79.500 L566.600 82.300 L583.300 117 L560.400 87.600 L556.600 87.100 Z" fill="#ee2d2d"/>
  <path d="M464 159.400 L479.200 166.400 L476.900 169.300 L516.700 221.300 L471.600 174 L467.500 175.700 Z" fill="#ee2d2d"/>
  <path d="M527.500 229.800 Q535 228.500 542.300 228 Q541 242 541 256 Q537 267 530 277.300 Q552 276.200 572.700 277.700" fill="none" stroke="#e8272d" stroke-width="3" stroke-linecap="round" stroke-linejoin="round"/>
</svg>

<!-- window border -->
<div class="abs" style="left:0;top:56px;width:1px;height:628px;background:#b7472a"></div>
<div class="abs" style="left:998px;top:56px;width:1px;height:628px;background:#dcb0a2"></div><div class="abs" style="left:999px;top:56px;width:1px;height:628px;background:#b7472a"></div>
<div class="abs" style="left:0;top:682px;width:1000px;height:2px;background:#b7472a"></div>

<!-- STATUS -->
<div id="status" class="abs">
  <div class="t" style="left:7px">幻灯片 第 15 张，共 36 张</div>
  <div class="t" style="left:161px">“Office 主题”</div>
  <div class="t" style="left:279px">中文(中国)</div>
  <div class="t" style="left:548px">备注</div>
  <div class="t" style="left:606px">批注</div>
  <div class="t" style="left:926px">70%</div>

  <svg class="abs" style="left:248px;top:5px" width="15" height="13" viewBox="0 0 15 13"><rect x=".6" y=".6" width="5.500" height="9.500" fill="none" stroke="#666" stroke-width="1.100"/><path d="M8 .6 H12.500 V10 H8" fill="none" stroke="#666" stroke-width="1.100"/><path d="M9 7 L10.500 9 L13.500 4.500" fill="none" stroke="#666" stroke-width="1.100"/></svg>
  <svg class="abs" style="left:533px;top:6px" width="12" height="12" viewBox="0 0 12 12"><path d="M3.500 3.500 L6 .8 L8.500 3.500 Z" fill="#666"/><path d="M.5 5.500 H11.500 M.5 8 H11.500 M.5 10.500 H8" stroke="#666" stroke-width="1.100"/></svg>
  <svg class="abs" style="left:591px;top:6px" width="12" height="12" viewBox="0 0 12 12"><path d="M0 0 H12 V8 H6 L3.500 11 V8 H0 Z" fill="#666"/></svg>
  <div class="abs" style="left:647px;top:0;width:37px;height:21px;background:#c8c6c6"></div>
  <svg class="abs" style="left:659px;top:5px" width="14" height="12" viewBox="0 0 14 12"><rect x=".6" y=".6" width="12.800" height="10.800" fill="none" stroke="#555" stroke-width="1.200"/><path d="M3.500 .6 V11.400 M3.500 8 H13.400" stroke="#555" stroke-width="1.100"/><rect x="5.800" y="2.800" width="5.400" height="3" fill="none" stroke="#555" stroke-width="1"/></svg>
  <svg class="abs" style="left:695px;top:5px" width="13" height="12" viewBox="0 0 13 12"><g fill="none" stroke="#555" stroke-width="1.100"><rect x=".6" y=".6" width="4.500" height="3.800"/><rect x="7.600" y=".6" width="4.500" height="3.800"/><rect x=".6" y="7.200" width="4.500" height="3.800"/><rect x="7.600" y="7.200" width="4.500" height="3.800"/></g></svg>
  <svg class="abs" style="left:731px;top:5px" width="13" height="12" viewBox="0 0 13 12"><path d="M.6 .8 H5 Q6.500 .8 6.500 2 Q6.500 .8 8 .8 H12.400 V10.200 H8 Q6.500 10.200 6.500 11.400 Q6.500 10.200 5 10.200 H.6 Z M6.500 2 V11" fill="none" stroke="#555" stroke-width="1.100"/><path d="M2 3 H5 M2 5 H5 M2 7 H5 M8 3 H11 M8 5 H11 M8 7 H11" stroke="#555" stroke-width=".9"/></svg>
  <svg class="abs" style="left:767px;top:5px" width="13" height="13" viewBox="0 0 13 13"><path d="M0 .8 H13" stroke="#555" stroke-width="1.300"/><rect x="1.600" y="1" width="9.800" height="6" fill="none" stroke="#555" stroke-width="1.100"/><path d="M6.500 7 V10 M3.500 12.400 H9.500 M6.500 10 L4 12.400 M6.500 10 L9 12.400" stroke="#555" stroke-width="1.100" fill="none"/></svg>
  <div class="abs" style="left:795px;top:10px;width:6px;height:2px;background:#444"></div>
  <div class="abs" style="left:807px;top:11px;width:94px;height:1px;background:#8a8a8a"></div>
  <div class="abs" style="left:853px;top:8px;width:1px;height:7px;background:#8a8a8a"></div>
  <div class="abs" style="left:837px;top:5px;width:4px;height:12px;background:#4a4a4a"></div>
  <svg class="abs" style="left:904px;top:6px" width="9" height="9" viewBox="0 0 9 9"><path d="M4.500 0 V9 M0 4.500 H9" stroke="#444" stroke-width="1.800"/></svg>
  <svg class="abs" style="left:971px;top:5px" width="13" height="13" viewBox="0 0 13 13"><rect x=".6" y=".6" width="11.800" height="11.800" fill="none" stroke="#555" stroke-width="1.200"/><path d="M6.500 2 L8.300 4.200 H4.700 Z M6.500 11 L8.300 8.800 H4.700 Z M2 6.500 L4.200 4.700 V8.300 Z M11 6.500 L8.800 4.700 V8.300 Z" fill="#555"/></svg>
</div>
</body>
</html>
